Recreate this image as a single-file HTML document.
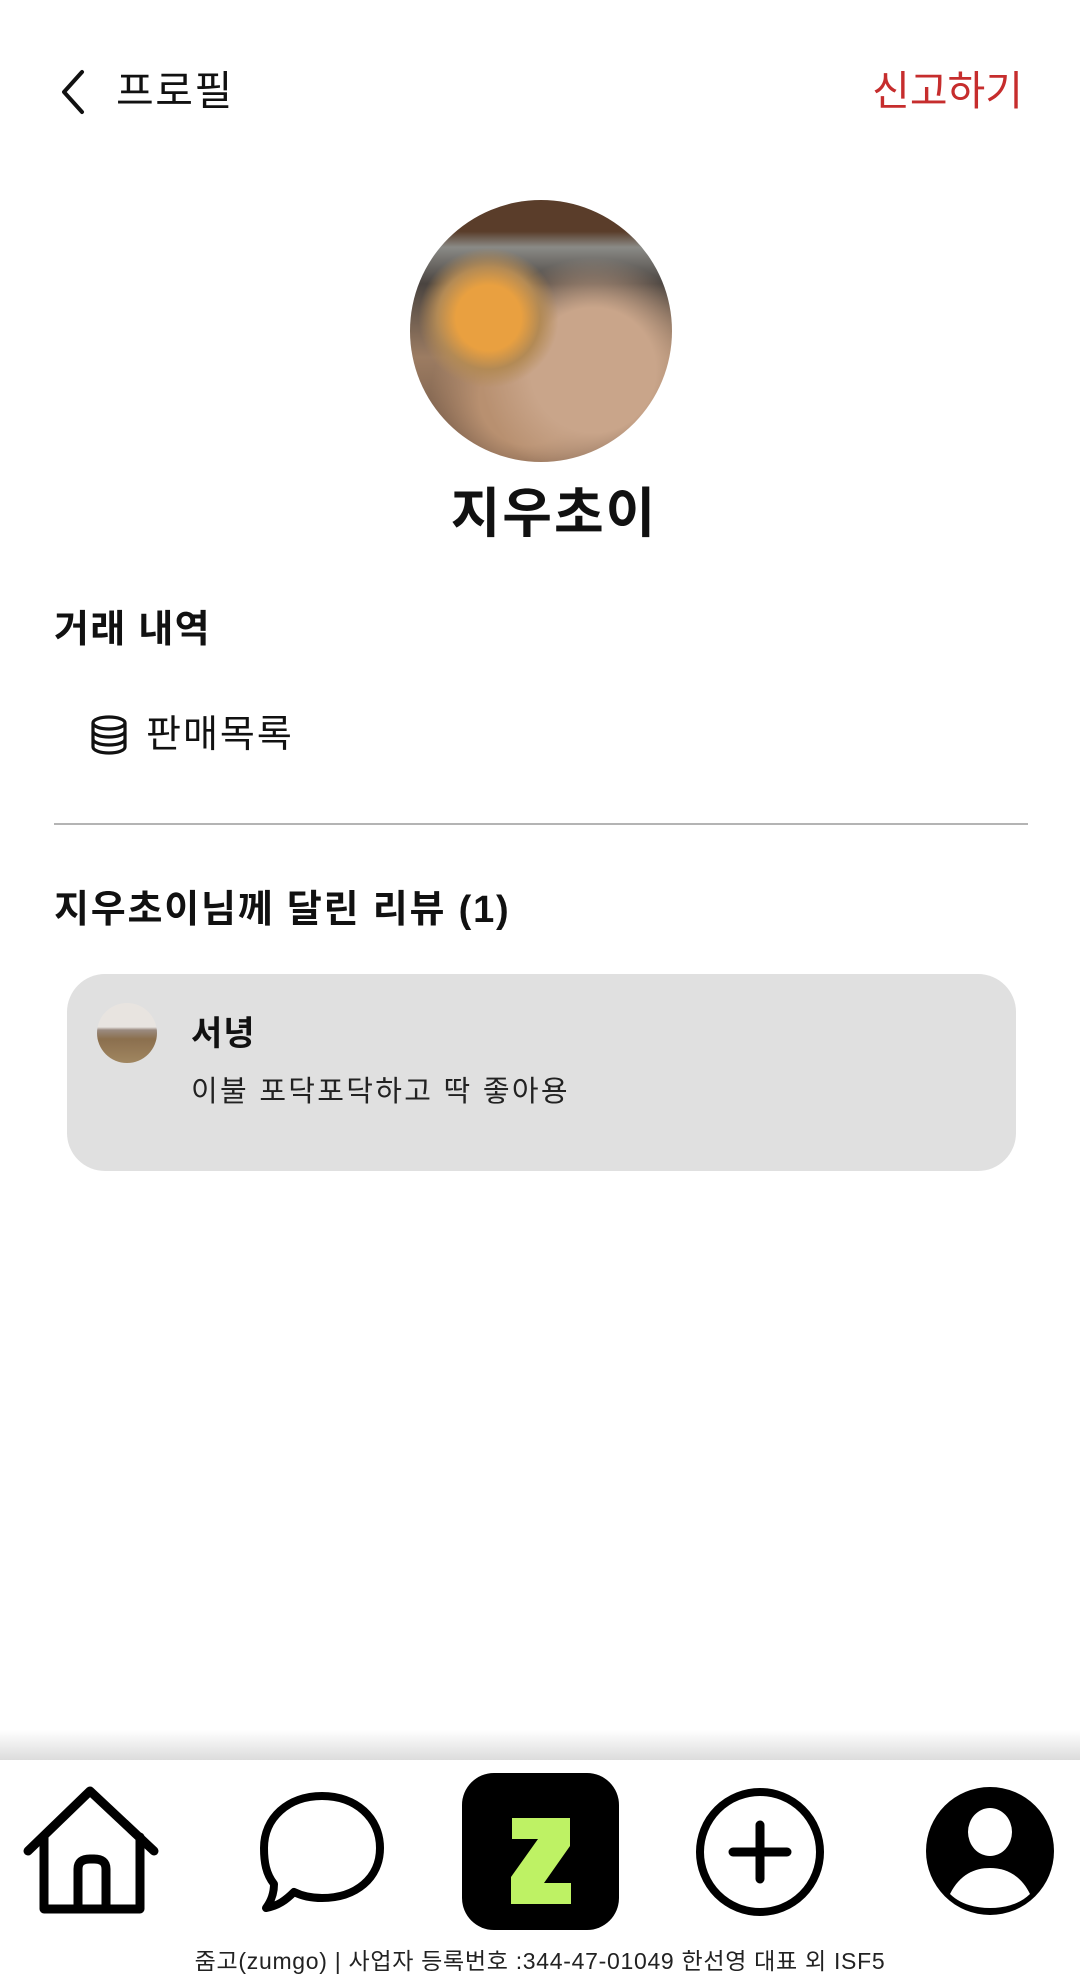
<!DOCTYPE html>
<html><head><meta charset="utf-8"><style>
*{margin:0;padding:0;box-sizing:border-box}
body{width:1080px;height:1977px;background:#fff;position:relative;overflow:hidden;font-family:"Liberation Sans","Noto Sans CJK KR",sans-serif;color:#111}
.a{position:absolute;white-space:nowrap}
</style></head><body>
<svg class="a" style="left:54px;top:68px" width="36" height="48" viewBox="0 0 36 48"><path d="M28 4 L10 24 L28 44" fill="none" stroke="#111" stroke-width="4" stroke-linecap="round" stroke-linejoin="round"/></svg>
<div class="a" style="left:116px;top:64px;font-size:41px;line-height:54px;letter-spacing:1.5px">프로필</div>
<div class="a" style="right:57px;top:64px;font-size:41px;line-height:54px;color:#c62d2d">신고하기</div>
<div class="a" style="left:410px;top:200px;width:262px;height:262px;border-radius:50%;overflow:hidden;background:radial-gradient(circle at 30% 45%,#e9a040 0 14%,#b38a55 22%,transparent 30%),radial-gradient(circle at 70% 65%,#c9a58a 0 25%,transparent 45%),radial-gradient(circle at 45% 75%,#b89070 0 20%,transparent 40%),linear-gradient(180deg,#5a3d2a 0 12%,#8a8a86 18%,#4a4440 32%,#9c7c62 60%,#6a5040 100%)"></div>
<div class="a" style="left:14px;width:1080px;text-align:center;top:480px;font-size:54px;font-weight:bold;line-height:68px;letter-spacing:2px">지우초이</div>
<div class="a" style="left:54px;top:606px;font-size:38px;font-weight:bold;line-height:48px;letter-spacing:1.3px">거래 내역</div>
<svg class="a" style="left:90px;top:715px" width="38" height="40" viewBox="0 0 38 40"><g fill="none" stroke="#111" stroke-width="3.2"><ellipse cx="19" cy="8" rx="16" ry="6"/><path d="M3 8v24c0 3.3 7.2 6 16 6s16-2.7 16-6V8M3 16c0 3.3 7.2 6 16 6s16-2.7 16-6M3 24c0 3.3 7.2 6 16 6s16-2.7 16-6"/></g></svg>
<div class="a" style="left:146px;top:711px;font-size:38px;line-height:48px;letter-spacing:2px">판매목록</div>
<div class="a" style="left:54px;top:823px;width:974px;height:2px;background:#b4b4b4"></div>
<div class="a" style="left:54px;top:886px;font-size:38px;font-weight:bold;line-height:48px;letter-spacing:1.8px">지우초이님께 달린 리뷰 (1)</div>
<div class="a" style="left:67px;top:974px;width:949px;height:197px;border-radius:38px;background:#e0e0e0"></div>
<div class="a" style="left:97px;top:1003px;width:60px;height:60px;border-radius:50%;background:linear-gradient(180deg,#e8e4e0 0 40%,#9a8a80 45%,#8b6f4e 60%,#a08660 100%)"></div>
<div class="a" style="left:191px;top:1012px;font-size:34px;font-weight:bold;line-height:44px;letter-spacing:1px">서녕</div>
<div class="a" style="left:191px;top:1073px;font-size:29px;line-height:38px;color:#222;letter-spacing:2.3px">이불 포닥포닥하고 딱 좋아용</div>
<div class="a" style="left:0;top:1730px;width:1080px;height:30px;background:linear-gradient(180deg,#fff,#dcdcdc)"></div>
<svg class="a" style="left:22px;top:1785px" width="140" height="132" viewBox="0 0 140 132"><path d="M6 66 L68 6 L132 66 M22 52 V124 H118 V52 M56 124 V84 Q56 74 68 74 H72 Q84 74 84 84 V124" fill="none" stroke="#000" stroke-width="9" stroke-linecap="round" stroke-linejoin="round"/></svg>
<svg class="a" style="left:256px;top:1788px" width="132" height="128" viewBox="0 0 132 128"><path d="M66 8 C100 8 124 30 124 60 C124 90 100 110 66 110 C56 110 46 108 38 104 C30 112 22 118 10 120 C16 112 18 104 18 96 C10 86 8 74 8 60 C8 30 32 8 66 8 Z" fill="none" stroke="#000" stroke-width="8" stroke-linejoin="round"/></svg>
<div class="a" style="left:462px;top:1773px;width:157px;height:157px;border-radius:32px;background:#000"></div>
<svg class="a" style="left:462px;top:1773px" width="157" height="157" viewBox="0 0 157 157"><path d="M50 45 H108 V73 L82 110 H109 V131 H49 V104 L76 66 H50 Z" fill="#bef264"/></svg>
<svg class="a" style="left:695px;top:1787px" width="130" height="130" viewBox="0 0 130 130"><circle cx="65" cy="65" r="60" fill="none" stroke="#000" stroke-width="8"/><path d="M65 38 V92 M38 65 H92" stroke="#000" stroke-width="9" stroke-linecap="round"/></svg>
<svg class="a" style="left:925px;top:1786px" width="130" height="130" viewBox="0 0 130 130"><circle cx="65" cy="65" r="64" fill="#000"/><ellipse cx="65" cy="46" rx="22" ry="24" fill="#fff"/><path d="M25 108 C35 88 50 82 65 82 C80 82 95 88 105 108 C95 118 80 122 65 122 C50 122 35 118 25 108 Z" fill="#fff"/></svg>
<div class="a" style="left:0;width:1080px;text-align:center;top:1946px;font-size:23px;line-height:30px;color:#222;letter-spacing:0.7px">줌고(zumgo) | 사업자 등록번호 :344-47-01049 한선영 대표 외 ISF5</div>
</body></html>
